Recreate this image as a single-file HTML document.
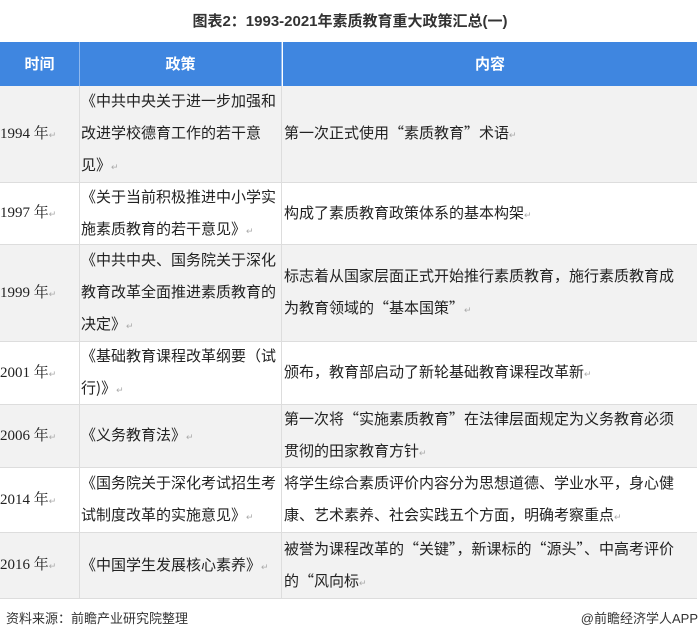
<!DOCTYPE html><html><head><meta charset="utf-8"><style>
body{margin:0;width:700px;height:642px;background:#fff;position:relative;font-family:"Liberation Sans","Noto Sans CJK SC",sans-serif;overflow:hidden}
.t{position:absolute;left:0;top:10px;width:700px;text-align:center;font-weight:bold;font-size:15px;color:#333}
.r{position:absolute;left:0;width:697px;border-bottom:1px solid #ddd}
.c{position:absolute;top:0;bottom:0;display:flex;align-items:center;font-size:15px;line-height:32px;color:#222;box-sizing:border-box}
.c>div{width:100%}
.c1{left:0;width:80px;border-right:1px solid #ddd;font-family:"Liberation Serif","Noto Serif CJK SC",serif}
.c2{left:80px;width:202px;border-right:1px solid #ddd;padding-left:1px;padding-right:4px;font-family:"Noto Sans CJK SC",sans-serif}
.c3{left:283px;width:414px;padding-left:1px;padding-right:10px;font-family:"Noto Sans CJK SC",sans-serif}
.h{background:#3f86e0;color:#fff;font-weight:bold;justify-content:center;border-right:1px solid #8fb8ee;text-align:center;padding:0}
.g{background:#f2f2f2}
.m{color:#aaa;font-size:9px}
.f{position:absolute;top:608px;font-size:13px;color:#333}
</style></head><body>
<div class="t">图表2：1993-2021年素质教育重大政策汇总(一)</div>
<div class="r" style="top:42px;height:44px;border:none">
<div class="c c1 h" style="font-family:'Noto Sans CJK SC',sans-serif"><div>时间</div></div><div class="c c2 h"><div>政策</div></div><div class="c c3 h" style="border:none"><div>内容</div></div></div>
<div class="r g" style="top:86px;height:96px"><div class="c c1"><div>1994 年<span class="m">↵</span></div></div><div class="c c2"><div>《中共中央关于进一步加强和改进学校德育工作的若干意见》<span class="m">↵</span></div></div><div class="c c3"><div>第一次正式使用“素质教育”术语<span class="m">↵</span></div></div></div>
<div class="r" style="top:183px;height:61px"><div class="c c1"><div>1997 年<span class="m">↵</span></div></div><div class="c c2"><div>《关于当前积极推进中小学实施素质教育的若干意见》<span class="m">↵</span></div></div><div class="c c3"><div>构成了素质教育政策体系的基本构架<span class="m">↵</span></div></div></div>
<div class="r g" style="top:245px;height:96px"><div class="c c1"><div>1999 年<span class="m">↵</span></div></div><div class="c c2"><div>《中共中央、国务院关于深化教育改革全面推进素质教育的决定》<span class="m">↵</span></div></div><div class="c c3"><div>标志着从国家层面正式开始推行素质教育，施行素质教育成为教育领域的“基本国策”<span class="m">↵</span></div></div></div>
<div class="r" style="top:342px;height:62px"><div class="c c1"><div>2001 年<span class="m">↵</span></div></div><div class="c c2"><div>《基础教育课程改革纲要（试行)》<span class="m">↵</span></div></div><div class="c c3"><div>颁布，教育部启动了新轮基础教育课程改革新<span class="m">↵</span></div></div></div>
<div class="r g" style="top:405px;height:62px"><div class="c c1"><div>2006 年<span class="m">↵</span></div></div><div class="c c2"><div>《义务教育法》<span class="m">↵</span></div></div><div class="c c3"><div>第一次将“实施素质教育”在法律层面规定为义务教育必须贯彻的田家教育方针<span class="m">↵</span></div></div></div>
<div class="r" style="top:468px;height:64px"><div class="c c1"><div>2014 年<span class="m">↵</span></div></div><div class="c c2"><div>《国务院关于深化考试招生考试制度改革的实施意见》<span class="m">↵</span></div></div><div class="c c3"><div>将学生综合素质评价内容分为思想道德、学业水平，身心健康、艺术素养、社会实践五个方面，明确考察重点<span class="m">↵</span></div></div></div>
<div class="r g" style="top:533px;height:65px"><div class="c c1"><div>2016 年<span class="m">↵</span></div></div><div class="c c2"><div>《中国学生发展核心素养》<span class="m">↵</span></div></div><div class="c c3"><div>被誉为课程改革的“关键”，新课标的“源头”、中高考评价的“风向标<span class="m">↵</span></div></div></div>
<div class="f" style="left:6px">资料来源：前瞻产业研究院整理</div>
<div class="f" style="right:2px">@前瞻经济学人APP</div>
</body></html>
